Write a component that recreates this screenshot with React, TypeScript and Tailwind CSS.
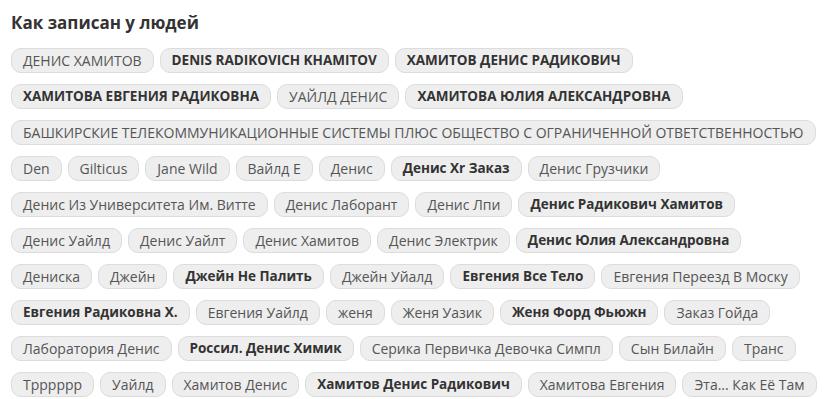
const tags: [string, boolean][] = [
  ["ДЕНИС ХАМИТОВ", false],
  ["DENIS RADIKOVICH KHAMITOV", true],
  ["ХАМИТОВ ДЕНИС РАДИКОВИЧ", true],
  ["ХАМИТОВА ЕВГЕНИЯ РАДИКОВНА", true],
  ["УАЙЛД ДЕНИС", false],
  ["ХАМИТОВА ЮЛИЯ АЛЕКСАНДРОВНА", true],
  ["БАШКИРСКИЕ ТЕЛЕКОММУНИКАЦИОННЫЕ СИСТЕМЫ ПЛЮС ОБЩЕСТВО С ОГРАНИЧЕННОЙ ОТВЕТСТВЕННОСТЬЮ", false],
  ["Den", false],
  ["Gilticus", false],
  ["Jane Wild", false],
  ["Вайлд Е", false],
  ["Денис", false],
  ["Денис Xr Заказ", true],
  ["Денис Грузчики", false],
  ["Денис Из Университета Им. Витте", false],
  ["Денис Лаборант", false],
  ["Денис Лпи", false],
  ["Денис Радикович Хамитов", true],
  ["Денис Уайлд", false],
  ["Денис Уайлт", false],
  ["Денис Хамитов", false],
  ["Денис Электрик", false],
  ["Денис Юлия Александровна", true],
  ["Дениска", false],
  ["Джейн", false],
  ["Джейн Не Палить", true],
  ["Джейн Уйалд", false],
  ["Евгения Все Тело", true],
  ["Евгения Переезд В Моску", false],
  ["Евгения Радиковна Х.", true],
  ["Евгения Уайлд", false],
  ["женя", false],
  ["Женя Уазик", false],
  ["Женя Форд Фьюжн", true],
  ["Заказ Гойда", false],
  ["Лаборатория Денис", false],
  ["Россил. Денис Химик", true],
  ["Серика Первичка Девочка Симпл", false],
  ["Сын Билайн", false],
  ["Транс", false],
  ["Трррррр", false],
  ["Уайлд", false],
  ["Хамитов Денис", false],
  ["Хамитов Денис Радикович", true],
  ["Хамитова Евгения", false],
  ["Эта... Как Её Там", false],
];

export default function App() {
  return (
    <div
      className="w-[827px] h-[399px] overflow-hidden bg-white pl-[11px] pt-[12px]"
      style={{ fontFamily: '"Open Sans", "Liberation Sans", sans-serif' }}
    >
      <h2 className="text-[17px] font-bold text-[#333] leading-[22px]">Как записан у людей</h2>
      <div className="mt-[14px] flex flex-wrap gap-x-[6px] gap-y-[11px]">
        {tags.map(([t, b]) => (
          <span
            key={t}
            className={
              b
                ? "whitespace-nowrap h-[25px] leading-[23px] px-[11px] rounded-[10px] border border-[#dcdcdc] bg-[#eeeeee] text-[13.5px] font-bold text-[#333]"
                : "whitespace-nowrap h-[25px] leading-[23px] px-[11px] rounded-[10px] border border-[#dcdcdc] bg-[#eeeeee] text-[14px] text-[#555]"
            }
          >
            {t}
          </span>
        ))}
      </div>
    </div>
  );
}
